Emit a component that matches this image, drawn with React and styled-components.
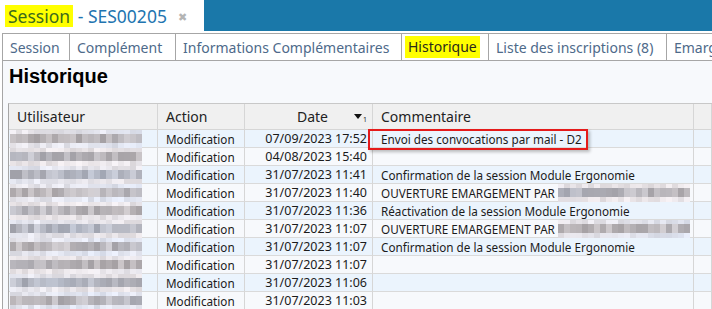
import React from "react";
import styled, { createGlobalStyle } from "styled-components";

const GlobalStyle = createGlobalStyle`
  body {
    margin: 0;
    background: #ffffff;
    font-family: "Noto Sans", "Open Sans", sans-serif;
  }
`;

const rows = [
  { date: "07/09/2023 17:52", comment: "Envoi des convocations par mail - D2", marked: true },
  { date: "04/08/2023 15:40", comment: "" },
  { date: "31/07/2023 11:41", comment: "Confirmation de la session Module Ergonomie" },
  { date: "31/07/2023 11:40", comment: "OUVERTURE EMARGEMENT PAR", hidden: true },
  { date: "31/07/2023 11:36", comment: "Réactivation de la session Module Ergonomie" },
  { date: "31/07/2023 11:07", comment: "OUVERTURE EMARGEMENT PAR", hidden: true },
  { date: "31/07/2023 11:07", comment: "Confirmation de la session Module Ergonomie" },
  { date: "31/07/2023 11:07", comment: "" },
  { date: "31/07/2023 11:06", comment: "" },
  { date: "31/07/2023 11:03", comment: "" },
];

const tabs = [
  { label: "Session", width: 68 },
  { label: "Complément", width: 106 },
  { label: "Informations Complémentaires", width: 226 },
  { label: "Historique", width: 87, active: true },
  { label: "Liste des inscriptions (8)", width: 178 },
  { label: "Emargement", width: 90 },
];

// pseudo random greys for the pixelated (masked) names
const shade = (seed, i, dark) => {
  const n = Math.abs(Math.sin(seed * 12.9898 + i * 78.233) * 43758.5453) % 1;
  const base = dark ? 160 + Math.round(n * 50) : 214 + Math.round(n * 30);
  const tint = Math.round((Math.abs(Math.sin(i * 3.1 + seed)) - 0.5) * 10);
  return `rgb(${base + tint}, ${base}, ${base + 8 - tint})`;
};

const Masked = ({ seed, cells = 22, gap = 0 }) => (
  <MaskRow $gap={gap}>
    {Array.from({ length: cells }).map((_, i) => (
      <MaskCell key={i} $top={shade(seed, i, false)} $mid={shade(seed + 7, i, true)} $bottom={shade(seed + 3, i, false)} />
    ))}
  </MaskRow>
);

const App = () => (
  <>
    <GlobalStyle />
    <TopBar>
      <TitleArea>
        <Marked>Session</Marked>
        <Code>&nbsp;- SES00205</Code>
        <Close>✖</Close>
      </TitleArea>
      <BlueFill />
    </TopBar>

    <TabBar>
      {tabs.map((t) => (
        <Tab key={t.label} $width={t.width}>
          {t.active ? <ActiveLabel>{t.label}</ActiveLabel> : t.label}
        </Tab>
      ))}
    </TabBar>

    <Panel>
      <Heading>Historique</Heading>
      <Grid>
        <HeadCell>Utilisateur</HeadCell>
        <HeadCell>Action</HeadCell>
        <HeadCell $center>
          Date
          <SortMark>
            <svg width="8" height="5" viewBox="0 0 8 5">
              <path d="M0 0 H8 L4 5 Z" fill="#111" />
            </svg>
            <SortIndex>1</SortIndex>
          </SortMark>
        </HeadCell>
        <HeadCell>Commentaire</HeadCell>
        <HeadCell />

        {rows.map((r, i) => (
          <React.Fragment key={i}>
            <Cell $odd={i % 2 === 0} $pad={1}>
              <Masked seed={i + 1} />
            </Cell>
            <Cell $odd={i % 2 === 0}>Modification</Cell>
            <Cell $odd={i % 2 === 0} $right $size={12.5}>{r.date}</Cell>
            <Cell $odd={i % 2 === 0}>
              {r.comment}
              {r.hidden && <Masked seed={i + 40} cells={22} gap={3} />}
              {r.marked && <RedFrame />}
            </Cell>
            <Cell $odd={i % 2 === 0} />
          </React.Fragment>
        ))}
      </Grid>
    </Panel>
  </>
);

const TopBar = styled.div`
  display: flex;
  height: 31px;
`;

const TitleArea = styled.div`
  width: 204px;
  display: flex;
  align-items: center;
  padding-left: 5px;
  box-sizing: border-box;
  font-size: 17.5px;
  white-space: nowrap;
`;

const Marked = styled.span`
  background: #ffff00;
  color: #3d6a1c;
  padding: 0 3px 0 3px;
  line-height: 22px;
`;

const Code = styled.span`
  color: #2274b0;
`;

const Close = styled.span`
  color: #b4b4b4;
  font-size: 11px;
  margin-left: 11px;
  margin-top: 2px;
`;

const BlueFill = styled.div`
  flex: 1;
  background: #1a78a9;
`;

const TabBar = styled.div`
  display: flex;
  margin: 2px 0 0 2px;
  height: 27px;
  overflow: hidden;
  white-space: nowrap;
`;

const Tab = styled.div`
  flex: 0 0 ${(p) => p.$width}px;
  box-sizing: border-box;
  display: flex;
  align-items: center;
  padding-left: 7px;
  border: 1px solid #a6a6a6;
  border-left: none;
  border-bottom: none;
  background: #ffffff;
  color: #4e6a8a;
  font-size: 14px;
  &:first-child {
    border-left: 1px solid #a6a6a6;
  }
`;

const ActiveLabel = styled.span`
  background: #ffff00;
  color: #2a2a1a;
  margin-left: -4px;
  padding: 1px 3px 2px;
  line-height: 19px;
`;

const Panel = styled.div`
  margin-left: 2px;
  border-left: 1px solid #a6a6a6;
  border-top: 1px solid #a6a6a6;
  background: #f7f9fc;
  padding: 3px 0 0 5px;
  height: 260px;
  overflow: hidden;
`;

const Heading = styled.h1`
  margin: 0 0 15px 1px;
  font-family: "Liberation Sans", Arial, sans-serif;
  font-size: 20px;
  line-height: 24px;
  font-weight: bold;
  color: #000;
`;

const Grid = styled.div`
  display: grid;
  grid-template-columns: 149px 87px 128px 321px 1fr;
  border-left: 1px solid #a6a6a6;
  border-top: 1px solid #c8c8c8;
  font-size: 11.7px;
`;

const HeadCell = styled.div`
  height: 26px;
  box-sizing: border-box;
  display: flex;
  align-items: center;
  justify-content: ${(p) => (p.$center ? "center" : "flex-start")};
  position: relative;
  padding-left: 8px;
  background: #f0f0f0;
  border-right: 1px solid #d6d6d6;
  border-bottom: 1px solid #d6d6d6;
  color: #222;
  font-size: 14px;
`;

const SortMark = styled.span`
  position: absolute;
  right: 5px;
  top: 10px;
  display: flex;
  align-items: flex-start;
  gap: 1px;
`;

const SortIndex = styled.span`
  font-size: 7px;
  line-height: 7px;
  margin-top: 2px;
  color: #222;
`;

const Cell = styled.div`
  height: 18px;
  box-sizing: border-box;
  position: relative;
  display: flex;
  align-items: center;
  justify-content: ${(p) => (p.$right ? "flex-end" : "flex-start")};
  padding: 0 ${(p) => (p.$right ? 5 : 0)}px 0 ${(p) => p.$pad ?? 8}px;
  background: ${(p) => (p.$odd ? "#ebf4fd" : "#f7f9fc")};
  border-right: 1px solid #d6d6d6;
  border-bottom: 1px solid #dadada;
  color: #1b1b1b;
  white-space: nowrap;
  ${(p) => p.$size && `font-size: ${p.$size}px;`}
`;

const MaskRow = styled.div`
  display: flex;
  height: 18px;
  margin: 0 0 -1px ${(p) => p.$gap}px;
`;

const MaskCell = styled.span`
  width: 6px;
  height: 18px;
  background: linear-gradient(
    ${(p) => p.$top} 0 4px,
    ${(p) => p.$mid} 4px 13px,
    ${(p) => p.$bottom} 13px 18px
  );
`;

const RedFrame = styled.span`
  position: absolute;
  left: -5px;
  top: -1px;
  width: 220px;
  height: 21px;
  box-sizing: border-box;
  border: 2px solid #e51b1b;
  box-shadow: 2px 2px 3px rgba(0, 0, 0, 0.25);
  z-index: 2;
`;

export default App;
